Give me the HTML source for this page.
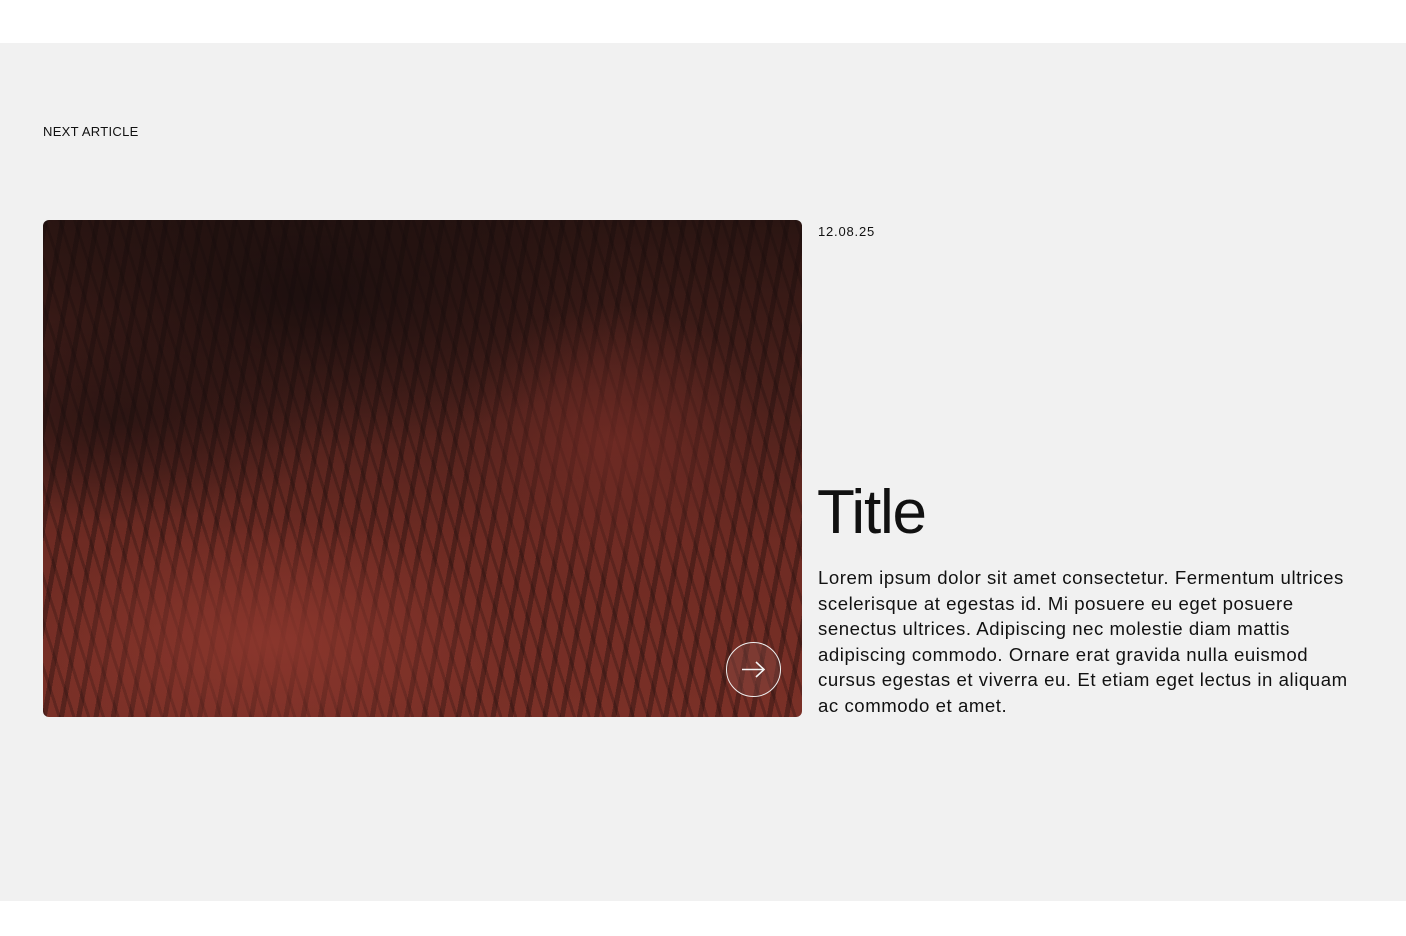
<!DOCTYPE html>
<html><head><meta charset="utf-8"><style>
*{margin:0;padding:0;box-sizing:border-box}
body{width:1406px;height:936px;background:#fff;font-family:"Liberation Sans",sans-serif;color:#111;position:relative;overflow:hidden}
.sec{position:absolute;left:0;top:43px;width:1406px;height:858px;background:#f1f1f1}
.lbl{position:absolute;left:43px;top:124px;font-size:13px;letter-spacing:0.3px}
.img{position:absolute;left:43px;top:220px;width:759px;height:497px;border-radius:6px;overflow:hidden;
background:
radial-gradient(ellipse 45% 35% at 30% 85%, rgba(140,55,45,.9), transparent 70%),
radial-gradient(ellipse 30% 40% at 75% 45%, rgba(120,45,38,.7), transparent 70%),
repeating-linear-gradient(100deg, rgba(20,10,10,.35) 0 5px, transparent 5px 17px),
repeating-linear-gradient(72deg, rgba(20,10,10,.25) 0 3px, transparent 3px 14px),
linear-gradient(180deg,#2a1512 0%,#4a201b 35%,#6e2b23 65%,#7a3027 100%);}
.shade{position:absolute;inset:0;background:radial-gradient(ellipse 60% 45% at 35% 15%, rgba(20,12,12,.75), transparent 70%),radial-gradient(ellipse 40% 30% at 10% 40%, rgba(20,12,12,.6), transparent 70%)}
.btn{position:absolute;left:683px;top:422px;width:55px;height:55px;border:1.5px solid #eee;border-radius:50%;background:rgba(140,80,75,.35)}
.date{position:absolute;left:818px;top:224px;font-size:13px;letter-spacing:0.8px}
.title{position:absolute;left:817px;top:475px;font-size:62px;letter-spacing:-1.2px;line-height:76px}
.p{position:absolute;left:818px;top:565px;width:538px;font-size:18.6px;line-height:25.6px;letter-spacing:0.55px}
</style></head><body>
<div class="sec"></div>
<div class="lbl">NEXT ARTICLE</div>
<div class="img"><div class="shade"></div>
<div class="btn"><svg width="55" height="55" viewBox="0 0 55 55" style="position:absolute;left:-1.5px;top:-1.5px"><path d="M16 27.5H38M30 20l8 7.5-8 7.5" stroke="#f4f4f4" stroke-width="1.6" fill="none"/></svg></div>
</div>
<div class="date">12.08.25</div>
<div class="title">Title</div>
<div class="p">Lorem ipsum dolor sit amet consectetur. Fermentum ultrices scelerisque at egestas id. Mi posuere eu eget posuere senectus ultrices. Adipiscing nec molestie diam mattis adipiscing commodo. Ornare erat gravida nulla euismod cursus egestas et viverra eu. Et etiam eget lectus in aliquam ac commodo et amet.</div>
</body></html>
